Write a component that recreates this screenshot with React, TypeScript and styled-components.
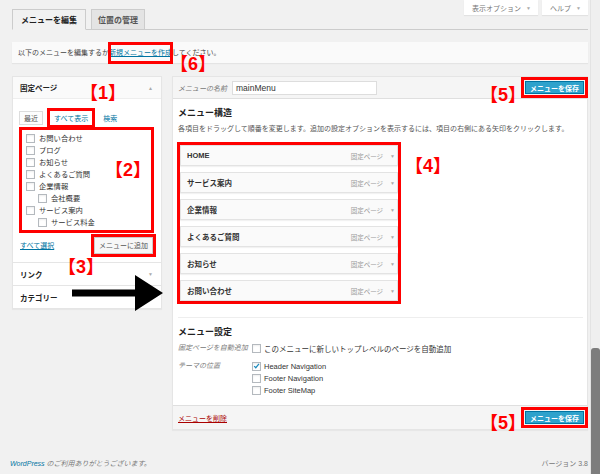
import React from "react";
import styled, { createGlobalStyle, css } from "styled-components";

const Global = createGlobalStyle`
  html, body { margin: 0; padding: 0; background: #f1f1f1; }
  body { font-family: "Liberation Sans", "Noto Sans CJK JP", sans-serif; color: #444; }
  * { box-sizing: border-box; }
`;

const Screen = styled.div`
  position: relative;
  width: 600px;
  height: 474px;
  overflow: hidden;
  display: flex;
  background: #f1f1f1;
`;

const Main = styled.div`
  flex: 1;
  display: flex;
  flex-direction: column;
  padding: 0 2px 0 12px;
`;

const ScrollTrack = styled.div`
  width: 10px;
  background: #efefef;
  border-left: 1px solid #e3e3e3;
  display: flex;
  justify-content: center;
  padding-top: 348px;
`;

const ScrollThumb = styled.div`
  width: 5px;
  flex: 1;
  background: #7d7d7d;
  border-radius: 3px 3px 0 0;
`;

/* ---------- top bar ---------- */
const TopBar = styled.div`
  height: 30px;
  display: flex;
  justify-content: space-between;
  border-bottom: 1px solid #ccc;
`;

const NavTabs = styled.div`
  display: flex;
  align-self: flex-end;
  align-items: flex-end;
  gap: 5px;
`;

const NavTab = styled.div<{ $active?: boolean }>`
  height: 21px;
  margin-bottom: -1px;
  padding: 0 ${(p) => (p.$active ? 8 : 6)}px;
  display: flex;
  align-items: center;
  font-size: 8px;
  font-weight: bold;
  border: 1px solid #ccc;
  ${(p) =>
    p.$active
      ? css`
          background: #f1f1f1;
          border-bottom-color: #f1f1f1;
          color: #222;
        `
      : css`
          background: #e4e4e4;
          color: #555;
        `}
`;

const MetaLinks = styled.div`
  display: flex;
  gap: 4px;
  align-self: flex-start;
`;

const MetaButton = styled.div`
  height: 15px;
  padding: 0 7px 0 8px;
  display: flex;
  align-items: center;
  gap: 5px;
  background: #fff;
  box-shadow: 0 1px 1px rgba(0, 0, 0, 0.06);
  font-size: 7px;
  color: #777;
`;

const TinyCaret = styled.span`
  font-size: 5px;
  color: #aaa;
`;

/* ---------- notice ---------- */
const Notice = styled.div`
  margin-top: 12px;
  height: 21px;
  line-height: 21px;
  padding-left: 6px;
  background: #fafafa;
  box-shadow: 0 1px 1px rgba(0, 0, 0, 0.05);
  font-size: 7px;
  color: #444;
  white-space: nowrap;
`;

const NoticeLink = styled.span`
  display: inline-block;
  line-height: 20px;
  color: #0074a2;
  text-decoration: underline;
  outline: 3px solid #ff0000;
  outline-offset: -2px;
`;

/* ---------- columns ---------- */
const Columns = styled.div`
  margin-top: 13px;
  display: flex;
  align-items: flex-start;
  gap: 10px;
`;

const SidePanel = styled.div`
  width: 150px;
  background: #fff;
  border: 1px solid #e5e5e5;
  box-shadow: 0 1px 1px rgba(0, 0, 0, 0.04);
`;

const SectionHead = styled.div<{ $open?: boolean }>`
  height: ${(p) => (p.$open ? 22 : 23)}px;
  padding: 0 8px 0 7px;
  display: flex;
  align-items: center;
  justify-content: space-between;
  font-size: 7.5px;
  font-weight: bold;
  color: #222;
  ${(p) =>
    p.$open
      ? css`
          background: #fafafa;
          border-bottom: 1px solid #eee;
        `
      : css`
          border-top: 1px solid #e5e5e5;
        `}
`;

const SectionBody = styled.div`
  padding: 12px 6px 8px 6px;
`;

const PickTabs = styled.div`
  display: flex;
  align-items: center;
  height: 14px;
  gap: 7px;
`;

const PickTab = styled.span<{ $boxed?: boolean; $link?: boolean; $marked?: boolean }>`
  height: 14px;
  padding: 0 4px;
  display: flex;
  align-items: center;
  font-size: 7px;
  color: ${(p) => (p.$link ? "#0074a2" : "#555")};
  ${(p) =>
    p.$boxed &&
    css`
      border: 1px solid #ddd;
      background: #fdfdfd;
    `}
  ${(p) =>
    p.$marked &&
    css`
      outline: 3px solid #ff0000;
      outline-offset: 0px;
    `}
`;

const CheckList = styled.div`
  margin-top: 2px;
  width: 135px;
  height: 106px;
  border: 3px solid #ff0000;
  padding: 2px 0 0 4px;
`;

const CheckRow = styled.div<{ $indent?: boolean }>`
  height: 12px;
  display: flex;
  align-items: center;
  gap: 4px;
  padding-left: ${(p) => (p.$indent ? 12 : 0)}px;
  font-size: 7.3px;
  color: #333;
  white-space: nowrap;
`;

const Box = styled.span`
  width: 9px;
  height: 9px;
  flex: none;
  border: 1px solid #b4b9be;
  background: #fff;
  box-shadow: inset 0 1px 2px rgba(0, 0, 0, 0.07);
  display: inline-flex;
  align-items: center;
  justify-content: center;
`;

const AddRow = styled.div`
  margin-top: 3px;
  height: 18px;
  display: flex;
  align-items: center;
  justify-content: space-between;
  padding: 0 2px 0 1px;
`;

const TextLink = styled.span<{ $danger?: boolean }>`
  font-size: 7px;
  color: ${(p) => (p.$danger ? "#a00" : "#0074a2")};
  text-decoration: underline;
`;

const GrayButton = styled.span`
  height: 17px;
  padding: 0 4px;
  display: flex;
  align-items: center;
  font-size: 7px;
  color: #555;
  background: #f7f7f7;
  border: 1px solid #ccc;
  outline: 3px solid #ff0000;
  outline-offset: 0px;
`;

/* ---------- right panel ---------- */
const EditPanel = styled.div`
  flex: 1;
  background: #fff;
  border: 1px solid #e5e5e5;
  box-shadow: 0 1px 1px rgba(0, 0, 0, 0.04);
`;

const EditHead = styled.div`
  height: 22px;
  padding: 0 3px 0 5px;
  display: flex;
  align-items: center;
  background: #f5f5f5;
  border-bottom: 1px solid #dfdfdf;
`;

const FieldLabel = styled.span`
  font-size: 7px;
  font-style: italic;
  color: #777;
  white-space: nowrap;
`;

const NameInput = styled.div`
  margin-left: 5px;
  width: 145px;
  height: 14px;
  padding: 0 3px;
  display: flex;
  align-items: center;
  border: 1px solid #ddd;
  background: #fff;
  font-size: 8.5px;
  color: #333;
`;

const SaveButton = styled.span`
  margin-left: auto;
  height: 13px;
  padding: 0 4px;
  display: flex;
  align-items: center;
  font-size: 7px;
  font-weight: bold;
  color: #fff;
  background: #2ea2cc;
  border: 1px solid #0074a2;
  outline: 3px solid #ff0000;
  outline-offset: 1px;
  white-space: nowrap;
`;

const EditBody = styled.div`
  padding: 8px 4px 9px 5px;
`;

const Heading = styled.div<{ $gap?: number }>`
  margin-top: ${(p) => p.$gap ?? 0}px;
  font-size: 9px;
  line-height: 12px;
  font-weight: bold;
  color: #222;
`;

const Desc = styled.div`
  margin-top: 4px;
  font-size: 7px;
  line-height: 11px;
  color: #555;
  white-space: nowrap;
`;

const MenuList = styled.div`
  margin: 8px 0 0 -1px;
  width: 224px;
  border: 3px solid #ff0000;
  display: flex;
  flex-direction: column;
  gap: 6px;
`;

const MenuItem = styled.div`
  height: 21px;
  padding: 0 2px 0 6px;
  display: flex;
  align-items: center;
  background: #fafafa;
  border: 1px solid #e3e3e3;
  box-shadow: 0 1px 1px rgba(0, 0, 0, 0.05);
`;

const ItemTitle = styled.span`
  flex: 1;
  font-size: 7.5px;
  font-weight: bold;
  color: #333;
`;

const ItemType = styled.span`
  font-size: 6.5px;
  color: #999;
`;

const ItemCaret = styled.span`
  margin-left: 7px;
  font-size: 5px;
  color: #aaa;
`;

const Divider = styled.div`
  margin-top: 13px;
  border-top: 1px solid #eee;
`;

const SettingsGrid = styled.div`
  margin-top: 4px;
  display: grid;
  grid-template-columns: 74px 1fr;
  row-gap: 6px;
`;

const OptionStack = styled.div`
  display: flex;
  flex-direction: column;
`;

const OptionRow = styled.div`
  height: 12px;
  display: flex;
  align-items: center;
  gap: 3px;
  font-size: 7.5px;
  color: #333;
  white-space: nowrap;
`;

const SettingLabel = styled(FieldLabel)`
  height: 12px;
  line-height: 12px;
`;

const EditFoot = styled.div`
  height: 24px;
  padding: 0 3px 0 5px;
  display: flex;
  align-items: center;
  background: #f5f5f5;
  border-top: 1px solid #dfdfdf;
`;

/* ---------- footer ---------- */
const PageFooter = styled.div`
  margin: auto 0 0 -2px;
  height: 22px;
  display: flex;
  align-items: center;
  justify-content: space-between;
  font-size: 7px;
  color: #777;
`;

const Thanks = styled.span`
  font-style: italic;
`;

const WpLink = styled.span`
  color: #0074a2;
`;

/* ---------- annotations ---------- */
const Badge = styled.div<{ $x: number; $y: number }>`
  position: absolute;
  left: ${(p) => p.$x}px;
  top: ${(p) => p.$y}px;
  font-size: 18px;
  line-height: 18px;
  font-weight: bold;
  color: #ff0000;
  font-family: "Liberation Sans", "Noto Sans CJK JP", sans-serif;
  white-space: nowrap;
`;

const ArrowMark = styled.svg`
  position: absolute;
  left: 70px;
  top: 273px;
`;

function CheckBox({ checked }: { checked?: boolean }) {
  return (
    <Box>
      {checked && (
        <svg width="8" height="8" viewBox="0 0 8 8">
          <path d="M1.3 4.2 L3.2 6 L6.8 1.6" fill="none" stroke="#1e8cbe" strokeWidth="1.4" />
        </svg>
      )}
    </Box>
  );
}

const pages = [
  { name: "お問い合わせ" },
  { name: "ブログ" },
  { name: "お知らせ" },
  { name: "よくあるご質問" },
  { name: "企業情報" },
  { name: "会社概要", child: true },
  { name: "サービス案内" },
  { name: "サービス料金", child: true },
];

const menuItems = ["HOME", "サービス案内", "企業情報", "よくあるご質問", "お知らせ", "お問い合わせ"];

const badges = [
  { n: 1, x: 80, y: 84 },
  { n: 2, x: 105, y: 161 },
  { n: 3, x: 58, y: 258 },
  { n: 4, x: 405, y: 157 },
  { n: 5, x: 480, y: 86 },
  { n: 5, x: 480, y: 414 },
  { n: 6, x: 170, y: 55 },
];

export default function App() {
  return (
    <Screen>
      <Global />
      <Main>
        <TopBar>
          <NavTabs>
            <NavTab $active>メニューを編集</NavTab>
            <NavTab>位置の管理</NavTab>
          </NavTabs>
          <MetaLinks>
            <MetaButton>
              表示オプション<TinyCaret>▼</TinyCaret>
            </MetaButton>
            <MetaButton>
              ヘルプ<TinyCaret>▼</TinyCaret>
            </MetaButton>
          </MetaLinks>
        </TopBar>

        <Notice>
          以下のメニューを編集するか<NoticeLink>新規メニューを作成</NoticeLink>してください。
        </Notice>

        <Columns>
          <SidePanel>
            <SectionHead $open>
              固定ページ<TinyCaret>▲</TinyCaret>
            </SectionHead>
            <SectionBody>
              <PickTabs>
                <PickTab $boxed>最近</PickTab>
                <PickTab $link $marked>
                  すべて表示
                </PickTab>
                <PickTab $link>検索</PickTab>
              </PickTabs>
              <CheckList>
                {pages.map((p) => (
                  <CheckRow key={p.name} $indent={p.child}>
                    <CheckBox />
                    {p.name}
                  </CheckRow>
                ))}
              </CheckList>
              <AddRow>
                <TextLink>すべて選択</TextLink>
                <GrayButton>メニューに追加</GrayButton>
              </AddRow>
            </SectionBody>
            <SectionHead>
              リンク<TinyCaret>▼</TinyCaret>
            </SectionHead>
            <SectionHead>カテゴリー</SectionHead>
          </SidePanel>

          <EditPanel>
            <EditHead>
              <FieldLabel>メニューの名前</FieldLabel>
              <NameInput>mainMenu</NameInput>
              <SaveButton>メニューを保存</SaveButton>
            </EditHead>
            <EditBody>
              <Heading>メニュー構造</Heading>
              <Desc>
                各項目をドラッグして順番を変更します。追加の設定オプションを表示するには、項目の右側にある矢印をクリックします。
              </Desc>
              <MenuList>
                {menuItems.map((m) => (
                  <MenuItem key={m}>
                    <ItemTitle>{m}</ItemTitle>
                    <ItemType>固定ページ</ItemType>
                    <ItemCaret>▼</ItemCaret>
                  </MenuItem>
                ))}
              </MenuList>
              <Divider />
              <Heading $gap={8}>メニュー設定</Heading>
              <SettingsGrid>
                <SettingLabel>固定ページを自動追加</SettingLabel>
                <OptionRow>
                  <CheckBox />
                  このメニューに新しいトップレベルのページを自動追加
                </OptionRow>
                <SettingLabel>テーマの位置</SettingLabel>
                <OptionStack>
                  <OptionRow>
                    <CheckBox checked />
                    Header Navigation
                  </OptionRow>
                  <OptionRow>
                    <CheckBox />
                    Footer Navigation
                  </OptionRow>
                  <OptionRow>
                    <CheckBox />
                    Footer SiteMap
                  </OptionRow>
                </OptionStack>
              </SettingsGrid>
            </EditBody>
            <EditFoot>
              <TextLink $danger>メニューを削除</TextLink>
              <SaveButton>メニューを保存</SaveButton>
            </EditFoot>
          </EditPanel>
        </Columns>

        <PageFooter>
          <Thanks>
            <WpLink>WordPress</WpLink> のご利用ありがとうございます。
          </Thanks>
          <span>バージョン 3.8</span>
        </PageFooter>
      </Main>
      <ScrollTrack>
        <ScrollThumb />
      </ScrollTrack>

      {badges.map((b, i) => (
        <Badge key={i} $x={b.x} $y={b.y}>
          【{b.n}】
        </Badge>
      ))}
      <ArrowMark width="96" height="40" viewBox="0 0 96 40">
        <path d="M2 16.5 H65 V2 L93 20 L65 38 V23.5 H2 Z" fill="#000" />
      </ArrowMark>
    </Screen>
  );
}
